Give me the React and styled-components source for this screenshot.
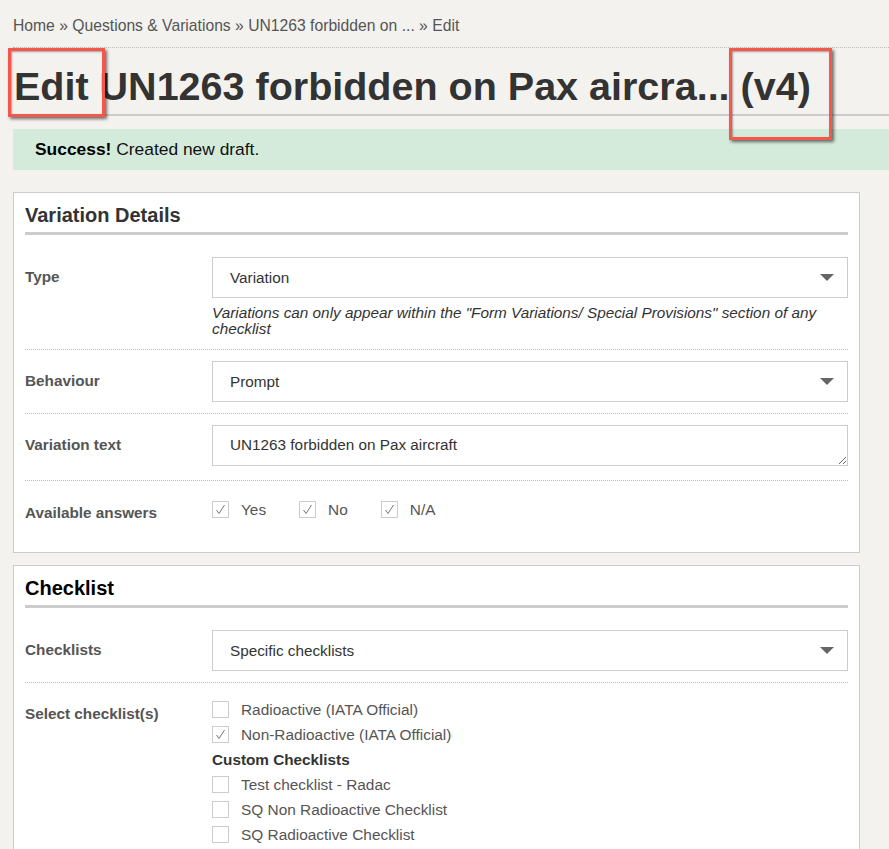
import React from "react";
import styled, { createGlobalStyle } from "styled-components";

const GlobalStyle = createGlobalStyle`
  body {
    margin: 0;
    background: #f3f2ee;
    font-family: "Liberation Sans", Arial, sans-serif;
    color: #333;
  }
`;

const Page = styled.div`
  position: relative;
  padding-left: 13px;
  overflow: hidden;
  height: 849px;
`;

const Breadcrumb = styled.div`
  font-size: 15.7px;
  line-height: 20px;
  color: #555;
  padding: 16px 0 11px;
  border-bottom: 1px dotted #bbb;
  white-space: nowrap;
`;

const Crumb = styled.span`
  &:not(:last-child)::after {
    content: " \\00bb  ";
    white-space: pre;
  }
`;

const Title = styled.h1`
  margin: 0;
  font-size: 39.5px;
  line-height: 44px;
  font-weight: bold;
  color: #333;
  padding: 16px 0 6px 1px;
  border-bottom: 2px solid #ccc;
  white-space: nowrap;
`;

const Alert = styled.div`
  margin-top: 13px;
  background: #d4ebdb;
  font-size: 17.4px;
  line-height: 20px;
  padding: 10px 22px 11px;
  color: #111;

  strong {
    color: #000;
  }
`;

const Panel = styled.section`
  width: 823px;
  margin-top: ${(p) => p.$top || 13}px;
  background: #fff;
  border: 1px solid #ccc;
  padding: 0 11px ${(p) => p.$bottom || 0}px;
`;

const PanelHeading = styled.h2`
  margin: 0;
  font-size: 20px;
  line-height: 24px;
  font-weight: bold;
  color: ${(p) => p.$color || "#333"};
  padding: 10px 0 5px;
  border-bottom: 3px solid #ccc;
  margin-bottom: 11px;
`;

const Row = styled.div`
  display: grid;
  grid-template-columns: 187px 1fr;
  padding: ${(p) => p.$pad || "11px 0 11px"};
  border-bottom: ${(p) => (p.$last ? "none" : "1px dotted #bbb")};
`;

const Label = styled.div`
  font-size: 15.3px;
  font-weight: bold;
  color: #555;
  line-height: 20px;
  padding-top: ${(p) => p.$top || 10}px;
`;

const Field = styled.div`
  display: flex;
  flex-direction: column;
`;

const Select = styled.div`
  position: relative;
  height: 39px;
  border: 1px solid #ccc;
  background: #fff;
  font-size: 15.3px;
  line-height: 39px;
  padding-left: 17px;
  color: #333;

  &::after {
    content: "";
    position: absolute;
    right: 13px;
    top: 16px;
    border-left: 7px solid transparent;
    border-right: 7px solid transparent;
    border-top: 7px solid #666;
  }
`;

const TextArea = styled.textarea`
  display: block;
  box-sizing: border-box;
  width: 100%;
  height: 41px;
  margin: 0 0 3px;
  border: 1px solid #ccc;
  font-family: "Liberation Sans", Arial, sans-serif;
  font-size: 15.3px;
  line-height: 20px;
  padding: 9px 17px;
  color: #333;
  resize: vertical;
  outline: none;
`;

const Help = styled.div`
  font-style: italic;
  font-size: 15.3px;
  line-height: 16px;
  color: #333;
  margin-top: 7px;
`;

const Inline = styled.div`
  display: flex;
  gap: 33px;
  padding-top: 5px;
`;

const List = styled.div`
  display: flex;
  flex-direction: column;
  padding-top: 3px;
`;

const Check = styled.label`
  display: flex;
  align-items: center;
  gap: 12px;
  height: 25px;
  font-size: 15.4px;
  color: #555;
`;

const Box = styled.span`
  box-sizing: border-box;
  width: 17px;
  height: 17px;
  border: 1px solid #ccc;
  background: #fff;
  display: flex;
  align-items: center;
  justify-content: center;
`;

const GroupTitle = styled.div`
  font-size: 15.3px;
  font-weight: bold;
  color: #333;
  height: 25px;
  line-height: 25px;
`;

const Marker = styled.div`
  position: absolute;
  left: ${(p) => p.$x}px;
  top: ${(p) => p.$y}px;
  width: ${(p) => p.$w}px;
  height: ${(p) => p.$h}px;
  box-sizing: border-box;
  border: 3px solid #f4574b;
  box-shadow: 2px 2px 3px rgba(0, 0, 0, 0.55), inset 1px 1px 2px rgba(0, 0, 0, 0.35);
  pointer-events: none;
`;

const Tick = () => (
  <svg width="11" height="11" viewBox="0 0 11 11">
    <path d="M1.5 6 L4 9.5 L9.5 1" fill="none" stroke="#777" strokeWidth="1" />
  </svg>
);

const CheckItem = ({ checked, children }) => (
  <Check>
    <Box>{checked ? <Tick /> : null}</Box>
    {children}
  </Check>
);

export default function App() {
  return (
    <>
      <GlobalStyle />
      <Page>
        <Breadcrumb>
          <Crumb>Home</Crumb>
          <Crumb>Questions &amp; Variations</Crumb>
          <Crumb>UN1263 forbidden on ...</Crumb>
          <Crumb>Edit</Crumb>
        </Breadcrumb>
        <Title>Edit UN1263 forbidden on Pax aircra... (v4)</Title>
        <Alert>
          <strong>Success!</strong> Created new draft.
        </Alert>

        <Panel $top={22} $bottom={29}>
          <PanelHeading>Variation Details</PanelHeading>
          <Row $pad="11px 0 12px">
            <Label>Type</Label>
            <Field>
              <Select>Variation</Select>
              <Help>
                Variations can only appear within the "Form Variations/ Special
                Provisions" section of any checklist
              </Help>
            </Field>
          </Row>
          <Row>
            <Label>Behaviour</Label>
            <Select>Prompt</Select>
          </Row>
          <Row>
            <Label>Variation text</Label>
            <TextArea defaultValue="UN1263 forbidden on Pax aircraft" />
          </Row>
          <Row $last $pad="11px 0 0">
            <Label $top={11}>Available answers</Label>
            <Inline>
              <CheckItem checked>Yes</CheckItem>
              <CheckItem checked>No</CheckItem>
              <CheckItem checked>N/A</CheckItem>
            </Inline>
          </Row>
        </Panel>

        <Panel $top={12} $bottom={20}>
          <PanelHeading $color="#000">Checklist</PanelHeading>
          <Row>
            <Label>Checklists</Label>
            <Select>Specific checklists</Select>
          </Row>
          <Row $last $pad="11px 0 0">
            <Label $top={10}>Select checklist(s)</Label>
            <List>
              <CheckItem>Radioactive (IATA Official)</CheckItem>
              <CheckItem checked>Non-Radioactive (IATA Official)</CheckItem>
              <GroupTitle>Custom Checklists</GroupTitle>
              <CheckItem>Test checklist - Radac</CheckItem>
              <CheckItem>SQ Non Radioactive Checklist</CheckItem>
              <CheckItem>SQ Radioactive Checklist</CheckItem>
            </List>
          </Row>
        </Panel>

        <Marker $x={8} $y={48} $w={97} $h={69} />
        <Marker $x={729} $y={48} $w={103} $h={92} />
      </Page>
    </>
  );
}
